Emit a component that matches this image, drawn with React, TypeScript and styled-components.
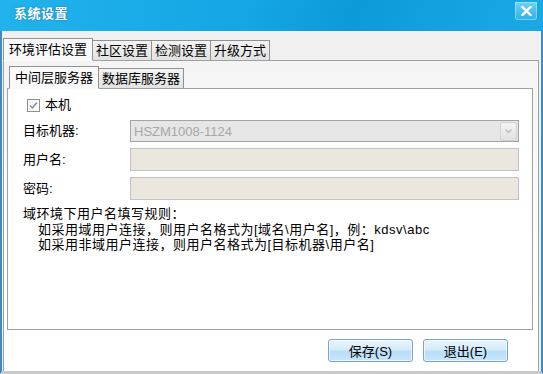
import React from "react";
import styled, { createGlobalStyle } from "styled-components";

const Global = createGlobalStyle`
  html, body {
    margin: 0;
    padding: 0;
    background: #ffffff;
  }
  body {
    font-family: "Liberation Sans", "Noto Sans CJK SC", sans-serif;
    font-size: 13px;
    color: #000;
  }
`;

const Window = styled.div`
  width: 543px;
  height: 374px;
  display: flex;
  flex-direction: column;
  overflow: hidden;
`;

const TitleBar = styled.div`
  height: 31px;
  flex: none;
  display: flex;
  align-items: flex-start;
  justify-content: space-between;
  background: linear-gradient(100deg, #22b3ec 0%, #14a6e5 45%, #0d9ad9 65%, #1aa9e6 100%);
`;

const Title = styled.div`
  margin: 5px 0 0 14px;
  color: #fff;
  font-weight: bold;
  font-size: 13px;
  letter-spacing: 0.5px;
  line-height: 18px;
  text-shadow: 0 0 2px rgba(0, 60, 120, 0.5);
`;

const CloseButton = styled.div`
  width: 22px;
  height: 18px;
  margin: 2px 6px 0 0;
  border-radius: 0 0 3px 3px;
  background: linear-gradient(#6fd0f5, #2cb2ea);
  box-shadow: inset 0 0 0 1px rgba(255, 255, 255, 0.35);
  display: flex;
  align-items: center;
  justify-content: center;
`;

const Body = styled.div`
  flex: 1;
  display: flex;
  flex-direction: column;
  background: #f0f0f0;
  border-left: 2px solid #3c8ac6;
  border-right: 2px solid #3c8ac6;
  border-bottom: 3px solid #c9c9c9;
  padding: 6px 2px 0 1px;
  min-height: 0;
`;

const TabStrip = styled.div<{ $inset?: number }>`
  display: flex;
  align-items: flex-end;
  padding-left: ${(p) => p.$inset ?? 0}px;
  height: 23px;
  flex: none;
  position: relative;
  z-index: 1;
`;

const Tab = styled.div<{ $active?: boolean }>`
  height: ${(p) => (p.$active ? 23 : 20)}px;
  line-height: ${(p) => (p.$active ? 22 : 20)}px;
  padding: 0 ${(p) => (p.$active ? 5 : 3)}px;
  border: 1px solid #919191;
  border-bottom: ${(p) => (p.$active ? "1px solid transparent" : "none")};
  margin-bottom: ${(p) => (p.$active ? -1 : 0)}px;
  margin-right: -1px;
  background: ${(p) =>
    p.$active ? "#f9f9f9" : "linear-gradient(#f3f3f3, #e2e2e2)"};
  font-size: 13px;
  white-space: nowrap;
  box-sizing: border-box;
  position: relative;
  z-index: ${(p) => (p.$active ? 2 : 1)};
`;

const OuterPanel = styled.div`
  flex: 1;
  display: flex;
  flex-direction: column;
  border: 1px solid #a0a0a0;
  border-bottom: none;
  background: linear-gradient(#f4f4f4 0%, #f6f6f6 10%, #ffffff 80%);
  padding: 4px 5px 0 3px;
  min-height: 0;
`;

const InnerPanel = styled.div`
  height: 242px;
  flex: none;
  box-sizing: border-box;
  border: 1px solid #a0a0a0;
  background: #ffffff;
  padding: 8px 13px 0 15px;
  display: flex;
  flex-direction: column;
`;

const CheckRow = styled.label`
  display: flex;
  align-items: center;
  gap: 5px;
  height: 16px;
  padding-left: 4px;
  margin-bottom: 7px;
  line-height: 16px;
`;

const CheckBox = styled.span`
  width: 11px;
  height: 11px;
  border: 1px solid #8e8f8f;
  background: linear-gradient(135deg, #f4f4f4, #ffffff);
  display: flex;
  align-items: center;
  justify-content: center;
`;

const FieldRow = styled.div<{ $h: number }>`
  display: grid;
  grid-template-columns: 107px 1fr;
  align-items: center;
  height: ${(p) => p.$h}px;
  margin-bottom: 6px;
`;

const Label = styled.span`
  line-height: 18px;
`;

const SelectBox = styled.div`
  height: 22px;
  box-sizing: border-box;
  border: 1px solid #a3a3a3;
  background: #e6e6e6;
  color: #a7a7a7;
  display: flex;
  align-items: center;
  justify-content: space-between;
  padding: 0 1px 0 3px;
  font-size: 13px;
`;

const DropButton = styled.span`
  width: 15px;
  height: 17px;
  border: 1px solid #d2d2d2;
  border-radius: 2px;
  background: linear-gradient(#f4f4f4, #e1e1e1);
  display: flex;
  align-items: center;
  justify-content: center;
`;

const TextInput = styled.div`
  height: 23px;
  box-sizing: border-box;
  border: 1px solid #c2c2c2;
  background: #ebe7df;
`;

const Note = styled.div`
  margin-top: 0;
  line-height: 15.5px;
  font-size: 13px;
  letter-spacing: 0.5px;
`;

const NoteLine = styled.div<{ $indent?: boolean }>`
  padding-left: ${(p) => (p.$indent ? 15 : 0)}px;
  white-space: pre;
`;

const Footer = styled.div`
  display: flex;
  justify-content: flex-end;
  gap: 10px;
  padding: 9px 25px 0 0;
`;

const Button = styled.button`
  width: 85px;
  height: 23px;
  border: 1px solid #7aa3cb;
  border-radius: 3px;
  background: linear-gradient(#eaf5fd 0%, #d4ebfa 45%, #b9def7 55%, #c8e6fa 100%);
  font-family: inherit;
  font-size: 13px;
  color: #000;
  padding: 0;
  box-shadow: inset 0 0 0 1px rgba(255, 255, 255, 0.6);
`;

export default function App() {
  return (
    <Window>
      <Global />
      <TitleBar>
        <Title>系统设置</Title>
        <CloseButton>
          <svg width="11" height="10" viewBox="0 0 11 10">
            <path d="M1.5 1 L9.5 9 M9.5 1 L1.5 9" stroke="#fff" strokeWidth="2.4" strokeLinecap="square" />
          </svg>
        </CloseButton>
      </TitleBar>
      <Body>
        <TabStrip>
          <Tab $active>环境评估设置</Tab>
          <Tab>社区设置</Tab>
          <Tab>检测设置</Tab>
          <Tab>升级方式</Tab>
        </TabStrip>
        <OuterPanel>
          <TabStrip $inset={2}>
            <Tab $active>中间层服务器</Tab>
            <Tab>数据库服务器</Tab>
          </TabStrip>
          <InnerPanel>
            <CheckRow>
              <CheckBox>
                <svg width="9" height="9" viewBox="0 0 9 9">
                  <path d="M1 4.5 L3.5 7 L8 1.5" fill="none" stroke="#8a8a8a" strokeWidth="1.4" />
                </svg>
              </CheckBox>
              本机
            </CheckRow>
            <FieldRow $h={22}>
              <Label>目标机器:</Label>
              <SelectBox>
                HSZM1008-1124
                <DropButton>
                  <svg width="7" height="5" viewBox="0 0 7 5">
                    <path d="M0.5 0.5 L3.5 3.5 L6.5 0.5" fill="none" stroke="#b9b9b9" strokeWidth="1.3" />
                  </svg>
                </DropButton>
              </SelectBox>
            </FieldRow>
            <FieldRow $h={23}>
              <Label>用户名:</Label>
              <TextInput />
            </FieldRow>
            <FieldRow $h={23}>
              <Label>密码:</Label>
              <TextInput />
            </FieldRow>
            <Note>
              <NoteLine>域环境下用户名填写规则：</NoteLine>
              <NoteLine $indent>如采用域用户连接，则用户名格式为[域名\用户名]，例：kdsv\abc</NoteLine>
              <NoteLine $indent>如采用非域用户连接，则用户名格式为[目标机器\用户名]</NoteLine>
            </Note>
          </InnerPanel>
          <Footer>
            <Button>保存(S)</Button>
            <Button>退出(E)</Button>
          </Footer>
        </OuterPanel>
      </Body>
    </Window>
  );
}
